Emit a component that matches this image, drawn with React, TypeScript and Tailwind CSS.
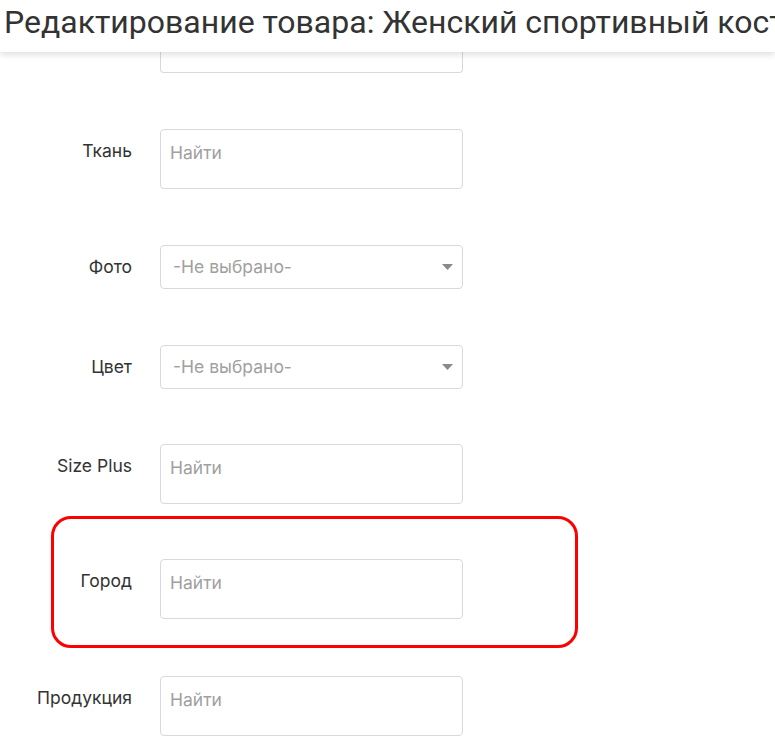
import React from "react";

const labelCls =
  "w-[132px] h-[44px] flex items-center justify-end text-[17.5px] text-[#333] shrink-0 whitespace-nowrap";

function SearchRow({ label, mt, children }: { label: string; mt: string; children?: React.ReactNode }) {
  return (
    <div className={`relative flex items-start ${mt}`}>
      {children}
      <div className={labelCls}>{label}</div>
      <div className="ml-[28px] w-[303px] h-[60px] border border-[#d9d9d9] rounded-[4px] px-[9px] text-[17.5px] leading-[46px] text-[#a0a0a0]">
        Найти
      </div>
    </div>
  );
}

function SelectRow({ label, mt }: { label: string; mt: string }) {
  return (
    <div className={`flex items-start ${mt}`}>
      <div className={labelCls}>{label}</div>
      <div className="ml-[28px] w-[303px] h-[44px] border border-[#d9d9d9] rounded-[4px] pl-[12px] pr-[9px] flex items-center justify-between text-[17.5px] text-[#a0a0a0]">
        <span>-Не выбрано-</span>
        <svg width="11" height="6" viewBox="0 0 11 6">
          <path d="M0 0 L11 0 L5.5 6 Z" fill="#8a8a8a" />
        </svg>
      </div>
    </div>
  );
}

export default function App() {
  return (
    <div
      className="w-[775px] h-[750px] overflow-hidden bg-white"
      style={{ fontFamily: "Inter, 'Liberation Sans', sans-serif" }}
    >
      <div
        className="relative z-10 h-[52px] bg-white shadow-[0_3px_6px_rgba(0,0,0,0.12)] overflow-hidden whitespace-nowrap pl-[4px] text-[32px] leading-[45px] text-[#333]"
        style={{ fontFamily: "Roboto, sans-serif" }}
      >
        Редактирование товара: Женский спортивный костюм
      </div>
      <div className="ml-[160px] w-[303px] h-[21px] border-x border-b border-[#d9d9d9] rounded-b-[4px]" />
      <SearchRow label="Ткань" mt="mt-[56px]" />
      <SelectRow label="Фото" mt="mt-[56px]" />
      <SelectRow label="Цвет" mt="mt-[56px]" />
      <SearchRow label="Size Plus" mt="mt-[55px]" />
      <SearchRow label="Город" mt="mt-[55px]">
        <div className="absolute left-[51px] top-[-43px] w-[527px] h-[132px] border-[3px] border-[#ff0000] rounded-[20px] pointer-events-none" />
      </SearchRow>
      <SearchRow label="Продукция" mt="mt-[57px]" />
    </div>
  );
}
